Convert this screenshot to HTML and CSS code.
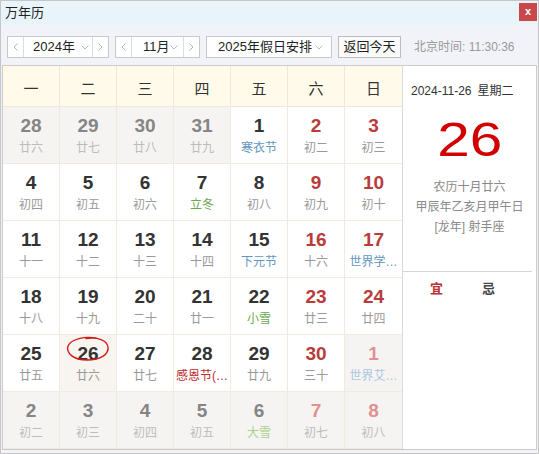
FILE: index.html
```html
<!DOCTYPE html>
<html lang="zh-CN">
<head>
<meta charset="utf-8">
<title>万年历</title>
<link rel="stylesheet" href="styles.css">
</head>
<body>
<div class="window">
  <div class="titlebar">
    <span class="title">万年历</span>
    <span class="close">x</span>
  </div>
  <div class="toolbar">
    <div class="spinner">
      <span class="arr arr-l"><svg width="5" height="8" viewBox="0 0 5 8"><path d="M4.5 0.5 L1 4 L4.5 7.5" fill="none" stroke="#b4b4b4"/></svg></span>
      <span class="val val-year"><span class="txt">2024年</span><svg width="8" height="5" viewBox="0 0 8 5"><path d="M0.5 0.5 L4 4 L7.5 0.5" fill="none" stroke="#bcbcbc"/></svg></span>
      <span class="arr arr-r"><svg width="5" height="8" viewBox="0 0 5 8"><path d="M0.5 0.5 L4 4 L0.5 7.5" fill="none" stroke="#b4b4b4"/></svg></span>
    </div>
    <div class="spinner">
      <span class="arr arr-l"><svg width="5" height="8" viewBox="0 0 5 8"><path d="M4.5 0.5 L1 4 L4.5 7.5" fill="none" stroke="#b4b4b4"/></svg></span>
      <span class="val val-month"><span class="txt">11月</span><svg width="8" height="5" viewBox="0 0 8 5"><path d="M0.5 0.5 L4 4 L7.5 0.5" fill="none" stroke="#bcbcbc"/></svg></span>
      <span class="arr arr-r"><svg width="5" height="8" viewBox="0 0 5 8"><path d="M0.5 0.5 L4 4 L0.5 7.5" fill="none" stroke="#b4b4b4"/></svg></span>
    </div>
    <div class="select"><span class="txt">2025年假日安排</span><svg width="8" height="5" viewBox="0 0 8 5"><path d="M0.5 0.5 L4 4 L7.5 0.5" fill="none" stroke="#bcbcbc"/></svg></div>
    <div class="btn">返回今天</div>
    <div class="clock">北京时间: 11:30:36</div>
  </div>
  <div class="main">
    <div class="cal">
      <div class="hd">一</div><div class="hd">二</div><div class="hd">三</div><div class="hd">四</div><div class="hd">五</div><div class="hd">六</div><div class="hd">日</div>

      <div class="day other"><div class="num">28</div><div class="lun">廿六</div></div>
      <div class="day other"><div class="num">29</div><div class="lun">廿七</div></div>
      <div class="day other"><div class="num">30</div><div class="lun">廿八</div></div>
      <div class="day other"><div class="num">31</div><div class="lun">廿九</div></div>
      <div class="day"><div class="num">1</div><div class="lun fest">寒衣节</div></div>
      <div class="day we"><div class="num">2</div><div class="lun">初二</div></div>
      <div class="day we"><div class="num">3</div><div class="lun">初三</div></div>

      <div class="day"><div class="num">4</div><div class="lun">初四</div></div>
      <div class="day"><div class="num">5</div><div class="lun">初五</div></div>
      <div class="day"><div class="num">6</div><div class="lun">初六</div></div>
      <div class="day"><div class="num">7</div><div class="lun term">立冬</div></div>
      <div class="day"><div class="num">8</div><div class="lun">初八</div></div>
      <div class="day we"><div class="num">9</div><div class="lun">初九</div></div>
      <div class="day we"><div class="num">10</div><div class="lun">初十</div></div>

      <div class="day"><div class="num">11</div><div class="lun">十一</div></div>
      <div class="day"><div class="num">12</div><div class="lun">十二</div></div>
      <div class="day"><div class="num">13</div><div class="lun">十三</div></div>
      <div class="day"><div class="num">14</div><div class="lun">十四</div></div>
      <div class="day"><div class="num">15</div><div class="lun fest">下元节</div></div>
      <div class="day we"><div class="num">16</div><div class="lun">十六</div></div>
      <div class="day we"><div class="num">17</div><div class="lun fest">世界学…</div></div>

      <div class="day"><div class="num">18</div><div class="lun">十八</div></div>
      <div class="day"><div class="num">19</div><div class="lun">十九</div></div>
      <div class="day"><div class="num">20</div><div class="lun">二十</div></div>
      <div class="day"><div class="num">21</div><div class="lun">廿一</div></div>
      <div class="day"><div class="num">22</div><div class="lun term">小雪</div></div>
      <div class="day we"><div class="num">23</div><div class="lun">廿三</div></div>
      <div class="day we"><div class="num">24</div><div class="lun">廿四</div></div>

      <div class="day"><div class="num">25</div><div class="lun">廿五</div></div>
      <div class="day today"><div class="num">26</div><div class="lun">廿六</div><svg class="ring" width="48" height="28" viewBox="0 0 48 28"><path d="M31 3 C20 1 6 4 3 11 C1 18 8 25 22 25 C36 25 44 19 43 12 C42 5 33 2 21 3.5" fill="none" stroke="#d21a1a" stroke-width="1.4" stroke-linecap="round"/></svg></div>
      <div class="day"><div class="num">27</div><div class="lun">廿七</div></div>
      <div class="day"><div class="num">28</div><div class="lun red">感恩节(…</div></div>
      <div class="day"><div class="num">29</div><div class="lun">廿九</div></div>
      <div class="day we"><div class="num">30</div><div class="lun">三十</div></div>
      <div class="day other we"><div class="num">1</div><div class="lun fest">世界艾…</div></div>

      <div class="day other"><div class="num">2</div><div class="lun">初二</div></div>
      <div class="day other"><div class="num">3</div><div class="lun">初三</div></div>
      <div class="day other"><div class="num">4</div><div class="lun">初四</div></div>
      <div class="day other"><div class="num">5</div><div class="lun">初五</div></div>
      <div class="day other"><div class="num">6</div><div class="lun term">大雪</div></div>
      <div class="day other we"><div class="num">7</div><div class="lun">初七</div></div>
      <div class="day other we"><div class="num">8</div><div class="lun">初八</div></div>
    </div>
    <div class="panel">
      <div class="date">2024-11-26<span class="wk">星期二</span></div>
      <div class="big"><span class="big-num">26</span></div>
      <div class="info">
        <div>农历十月廿六</div>
        <div>甲辰年乙亥月甲午日</div>
        <div>[龙年] 射手座</div>
      </div>
      <div class="divider"></div>
      <div class="yiji"><span class="yi">宜</span><span class="ji">忌</span></div>
    </div>
  </div>
</div>
</body>
</html>
```

FILE: styles.css
```css
body {
  margin: 0;
  font-family: "Liberation Sans", "Noto Sans CJK SC", sans-serif;
  background: #ffffff;
}

.window {
  width: 539px;
  height: 454px;
  box-sizing: border-box;
  border: 1px solid #c6c6c6;
  background: #f1f3f8;
  display: flex;
  flex-direction: column;
}

.titlebar {
  height: 24px;
  flex: none;
  background: #e8f4fa;
  display: flex;
  justify-content: space-between;
  padding-left: 4px;
}

.title {
  font-size: 13px;
  line-height: 24px;
  color: #222;
}

.close {
  width: 18px;
  height: 18px;
  margin-top: 2px;
  margin-right: 1px;
  background: #c9484b;
  color: #fff;
  font-size: 11px;
  font-weight: bold;
  line-height: 16px;
  text-align: center;
}

.toolbar {
  height: 40px;
  flex: none;
  box-sizing: border-box;
  padding: 11px 0 0 6px;
  display: flex;
  align-items: flex-start;
}

.spinner,
.select,
.btn {
  flex: none;
  height: 22px;
  box-sizing: border-box;
  border: 1px solid #c8c8c8;
  background: #fff;
  font-size: 13px;
  color: #222;
  margin-right: 6px;
  overflow: hidden;
}

.spinner {
  display: flex;
  width: 102px;
}

.spinner + .spinner {
  width: 85px;
}

.arr {
  flex: none;
  width: 16px;
  box-sizing: border-box;
  display: flex;
  align-items: center;
  justify-content: center;
}

.arr-l {
  border-right: 1px solid #dcdcdc;
}

.arr-r {
  border-left: 1px solid #dcdcdc;
}

.val {
  flex: 1 1 0;
  min-width: 0;
  overflow: hidden;
  display: flex;
  align-items: center;
  justify-content: space-between;
  line-height: 20px;
}

.txt {
  white-space: nowrap;
}

.val-year {
  padding: 0 3px 0 9px;
}

.val-month {
  padding: 0 5px 0 11px;
}

.select {
  width: 126px;
  padding: 0 8px 0 11px;
  display: flex;
  align-items: center;
  justify-content: space-between;
  line-height: 20px;
}

.btn {
  width: 63px;
  border-color: #bdbdbd;
  background: #fbfbfb;
  text-align: center;
  line-height: 20px;
}

.clock {
  flex: none;
  margin-left: 7px;
  font-size: 12px;
  line-height: 22px;
  color: #9a9a9a;
  white-space: nowrap;
}

.main {
  flex: none;
  margin: 0 1px;
  border: 1px solid #cbcbcb;
  background: #fff;
  display: flex;
}

.cal {
  display: grid;
  grid-template-columns: repeat(7, 57px);
  grid-template-rows: 41px repeat(6, 57px);
}

.hd {
  box-sizing: border-box;
  background: #fffaea;
  border-right: 1px solid #efe8da;
  border-bottom: 1px solid #efe8da;
  font-size: 15px;
  color: #333;
  display: flex;
  align-items: center;
  justify-content: center;
  padding-top: 2px;
}

.day {
  box-sizing: border-box;
  border-right: 1px solid #f0eae0;
  border-bottom: 1px solid #f0eae0;
  text-align: center;
  padding-top: 8px;
  position: relative;
  overflow: hidden;
}

.hd:nth-child(7n),
.day:nth-child(7n) {
  border-right: none;
}

.num {
  font-size: 19px;
  font-weight: bold;
  line-height: 22px;
  color: #333;
}

.lun {
  margin-top: 2px;
  font-size: 12px;
  line-height: 18px;
  color: #999;
  white-space: nowrap;
}

.we .num {
  color: #b83c3c;
}

.other {
  background: #f5f4f2;
}

.other .num {
  color: #858585;
}

.other.we .num {
  color: #df9191;
}

.other .lun {
  color: #bcbcbc;
}

.today {
  background: #f8f5f0;
}

.lun.fest {
  color: #6396be;
}

.lun.term {
  color: #6aa84f;
}

.lun.red {
  color: #be2b2b;
}

.other .lun.fest {
  color: #a9c6dd;
}

.other .lun.term {
  color: #abd091;
}

.ring {
  position: absolute;
  left: 5px;
  top: 0;
}

.panel {
  width: 134px;
  box-sizing: border-box;
  border-left: 1px solid #d9d9d9;
  background: #fff;
}

.date {
  padding: 17px 0 0 8px;
  font-size: 12px;
  line-height: 16px;
  color: #333;
  white-space: nowrap;
}

.wk {
  margin-left: 6px;
}

.big {
  margin-top: 17px;
  font-size: 48px;
  line-height: 48px;
  text-align: center;
  color: #d20000;
}

.big-num {
  display: inline-block;
  transform: scaleX(1.22);
}

.info {
  margin-top: 13px;
  font-size: 12px;
  line-height: 20px;
  color: #8a8a8a;
  text-align: center;
}

.divider {
  margin: 34px 4px 0 0;
  border-top: 1px solid #d6d6d6;
}

.yiji {
  display: flex;
  gap: 39px;
  padding-left: 27px;
  margin-top: 9px;
  font-size: 13px;
  font-weight: bold;
  line-height: 16px;
}

.yi {
  color: #b83030;
}

.ji {
  color: #444;
}
```
